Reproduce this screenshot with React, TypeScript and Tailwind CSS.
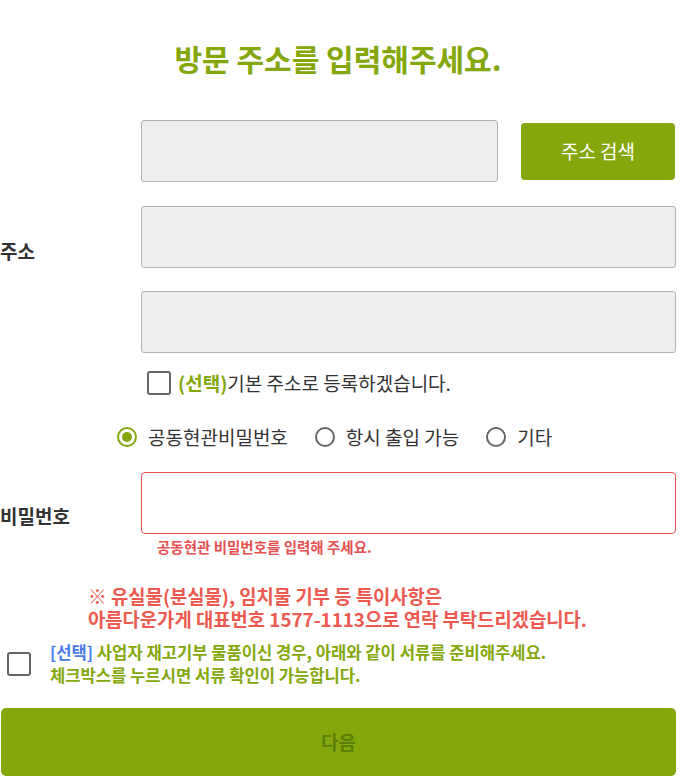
import React from "react";

const font = { fontFamily: '"Noto Sans CJK KR", "Noto Sans", sans-serif' };

function Radio({ checked, label }: { checked?: boolean; label: string }) {
  return (
    <label className="flex items-center gap-[11px]">
      {checked ? (
        <span className="w-[20px] h-[20px] rounded-full border-2 border-[#84a70c] flex items-center justify-center">
          <span className="w-[10px] h-[10px] rounded-full bg-[#84a70c]" />
        </span>
      ) : (
        <span className="w-[20px] h-[20px] rounded-full border-2 border-[#666666]" />
      )}
      <span className="text-[19px] text-[#333333] leading-[24px]">{label}</span>
    </label>
  );
}

function Box() {
  return <span className="w-[24px] h-[24px] shrink-0 rounded-[3px] border-2 border-[#666666] bg-white" />;
}

export default function App() {
  return (
    <div className="w-[676px] bg-white pb-[6px]" style={font}>
      <h1 className="pt-[39px] text-center text-[30px] leading-[38px] font-bold text-[#84a70c]">
        방문 주소를 입력해주세요.
      </h1>

      <div className="flex mt-[43px]">
        <div className="w-[141px] shrink-0 pt-[119px] text-[19px] leading-[24px] font-bold text-[#333333]">주소</div>
        <div className="flex-1">
          <div className="flex items-center gap-[23px]">
            <input className="w-[357px] h-[62px] rounded-[3px] border border-[#b3b3b3] bg-[#eeeeee]" />
            <button className="w-[154px] h-[57px] rounded-[4px] bg-[#84a70c] text-white text-[19px]">주소 검색</button>
          </div>
          <input className="block mt-[24px] w-full h-[62px] rounded-[3px] border border-[#b3b3b3] bg-[#eeeeee]" />
          <input className="block mt-[23px] w-full h-[62px] rounded-[3px] border border-[#b3b3b3] bg-[#eeeeee]" />
          <div className="flex items-center gap-[7px] mt-[18px] ml-[6px]">
            <Box />
            <span className="text-[19px] leading-[24px] text-[#333333]">
              <span className="font-bold text-[#84a70c]">(선택)</span>기본 주소로 등록하겠습니다.
            </span>
          </div>
        </div>
      </div>

      <div className="flex items-center gap-[27px] mt-[30px] ml-[117px]">
        <Radio checked label="공동현관비밀번호" />
        <Radio label="항시 출입 가능" />
        <Radio label="기타" />
      </div>

      <div className="flex mt-[23px]">
        <div className="w-[141px] shrink-0 pt-[32px] text-[19px] leading-[24px] font-bold text-[#333333]">비밀번호</div>
        <div className="flex-1">
          <input className="block w-full h-[62px] rounded-[4px] border border-[#e5514f] bg-white" />
          <p className="mt-[3px] ml-[16px] text-[14.5px] leading-[20px] font-bold text-[#e5514f]">
            공동현관 비밀번호를 입력해 주세요.
          </p>
        </div>
      </div>

      <div className="mt-[27px] ml-[88px] text-[18.8px] leading-[23px] font-bold text-[#ec5a50]">
        <p>※ 유실물(분실물), 임치물 기부 등 특이사항은</p>
        <p>아름다운가게 대표번호 1577-1113으로 연락 부탁드리겠습니다.</p>
      </div>

      <div className="flex items-center gap-[19px] mt-[11px] ml-[7px]">
        <Box />
        <div className="text-[16.6px] leading-[23px] font-bold text-[#84a70c]">
          <p>
            <span className="text-[#4a7bea]">[선택]</span> 사업자 재고기부 물품이신 경우, 아래와 같이 서류를 준비해주세요.
          </p>
          <p>체크박스를 누르시면 서류 확인이 가능합니다.</p>
        </div>
      </div>

      <button className="block mt-[21px] ml-[1px] w-[675px] h-[68px] rounded-[5px] bg-[#84a70c] text-[19px] font-bold text-[#5e7f07]">
        다음
      </button>
    </div>
  );
}
